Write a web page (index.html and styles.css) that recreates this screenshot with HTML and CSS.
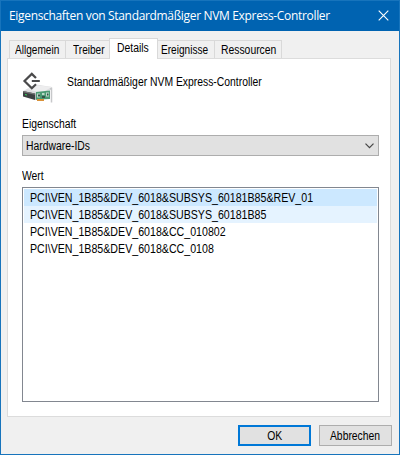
FILE: index.html
```html
<!DOCTYPE html>
<html lang="de">
<head>
<meta charset="utf-8">
<title>Eigenschaften</title>
<link rel="stylesheet" href="styles.css">
</head>
<body>
<main class="window">
  <header class="titlebar">
    <h1 class="title">Eigenschaften von Standardmäßiger NVM Express-Controller</h1>
    <svg class="close" width="11" height="11" viewBox="0 0 11 11"><path d="M.7.7l9.6 9.6M10.3.7L.7 10.3" stroke="#fff" stroke-width="1.1"/></svg>
  </header>
  <nav class="tabs">
    <div class="tab allgemein"><span class="text tight">Allgemein</span></div>
    <div class="tab treiber"><span class="text tight">Treiber</span></div>
    <div class="tab details"><span class="text">Details</span></div>
    <div class="tab ereignisse"><span class="text tight">Ereignisse</span></div>
    <div class="tab ressourcen"><span class="text">Ressourcen</span></div>
  </nav>
  <section class="panel">
    <div class="device">
      <svg class="device-icon" width="32" height="32" viewBox="0 0 32 32">
        <path d="M1 19L14 12.500 30 15v2L15 24z" fill="#dedee0"/>
        <path d="M12 13l18 2-11 6-14-4z" fill="#ededee"/>
        <path d="M1 19l12 2.500V28L1 24.500z" fill="#3d4042"/>
        <path d="M1 19l12 2.500v1.300L1 20.300z" fill="#777"/>
        <path d="M13 21.500l3-1V27l-3 1z" fill="#b5b5b7"/>
        <path d="M3 22.500l2 .5" stroke="#35d35e"/>
        <path d="M14 20l14-1.500V27l-14 .8z" fill="#4a9a73"/>
        <path d="M15 21.500h3v4h-3zM20 21h2.500v2H20zM24 20.500h3v4h-3z" fill="#b9d8c7"/>
        <path d="M16 22.500h2v2h-2zM20 24h3v2h-3zM25 21.500h1.500v2H25z" fill="#35534a"/>
        <path d="M15 27h7v2h-7z" fill="#d99139"/>
        <path d="M28 17l1.500-.5V30.500" fill="none" stroke="#c7c8ca" stroke-width="1.500"/>
        <path d="M14 6L9.800 1.900 2.500 9l7.300 7.200L14 12.300M9.800 9h8" fill="none" stroke="#4a4a4b" stroke-width="2.200"/>
      </svg>
      <span class="text device-name">Standardmäßiger NVM Express-Controller</span>
    </div>
    <div class="label property"><span class="text">Eigenschaft</span></div>
    <div class="select">
      <span class="text">Hardware-IDs</span>
      <svg width="9" height="6" viewBox="0 0 9 6"><path d="M.5.7l4 4 4-4" fill="none" stroke="#454545" stroke-width="1.200"/></svg>
    </div>
    <div class="label value"><span class="text">Wert</span></div>
    <div class="list">
      <div class="row selected-row"><span class="text wide">PCI\VEN_1B85&amp;DEV_6018&amp;SUBSYS_60181B85&amp;REV_01</span></div>
      <div class="row hover-row"><span class="text wide">PCI\VEN_1B85&amp;DEV_6018&amp;SUBSYS_60181B85</span></div>
      <div class="row"><span class="text wide">PCI\VEN_1B85&amp;DEV_6018&amp;CC_010802</span></div>
      <div class="row"><span class="text wide">PCI\VEN_1B85&amp;DEV_6018&amp;CC_0108</span></div>
    </div>
  </section>
  <footer class="actions">
    <button class="button primary"><span class="text centered">OK</span></button>
    <button class="button cancel"><span class="text centered">Abbrechen</span></button>
  </footer>
</main>
</body>
</html>
```
FILE: styles.css
```css
* { box-sizing: border-box; }
body { margin: 0; }
.window {
  width: 400px;
  height: 455px;
  border: 1px solid #1774bc;
  background: #f0f0f0;
  color: #000;
  font: 12px/16px "Liberation Sans", sans-serif;
  white-space: nowrap;
  overflow: hidden;
}
.text {
  display: inline-block;
  transform: scaleX(.864);
  transform-origin: left center;
}
.tight { transform: scaleX(.84); }
.wide { transform: scaleX(.886); }
.centered { transform-origin: center; }
.titlebar {
  display: flex;
  align-items: center;
  justify-content: space-between;
  height: 30px;
  padding: 0 10px 0 8px;
  background: #0063b1;
}
.title {
  margin: 0;
  color: #fff;
  font: 400 12px/28px "Open Sans", sans-serif;
  letter-spacing: -.33px;
}
.close { margin-top: -2px; }
.tabs {
  display: flex;
  align-items: flex-end;
  height: 27px;
  padding-left: 8px;
}
.tab {
  height: 18px;
  border: 1px solid #d9d9d9;
  border-width: 1px 1px 0 0;
  padding-left: 7px;
  line-height: 19px;
}
.allgemein { width: 57px; border-left-width: 1px; padding-left: 5px; }
.treiber { width: 43px; border-right: 0; }
.details {
  position: relative;
  width: 49px;
  height: 21px;
  margin-bottom: -1px;
  border-left-width: 1px;
  background: #fff;
}
.ereignisse { width: 57px; padding-left: 3px; }
.ressourcen { width: 67px; padding-left: 6px; }
.panel {
  display: flex;
  flex-direction: column;
  width: 384px;
  height: 359px;
  margin-left: 6px;
  padding: 12px 11px 13px 14px;
  border: 1px solid #dcdcdc;
  background: #fff;
}
.device { display: flex; flex: none; height: 45px; }
.device-icon { flex: none; margin-top: 1px; }
.device-name { margin: 3px 0 0 13px; }
.label { flex: none; }
.property { height: 19px; }
.select {
  display: flex;
  align-items: center;
  justify-content: space-between;
  flex: none;
  height: 21px;
  padding: 1px 4px 0 3px;
  border: 1px solid #adadad;
  background: #e1e1e1;
}
.value { height: 31px; padding-top: 12px; }
.list {
  flex: none;
  height: 215px;
  padding: 1px;
  border: 1px solid #828790;
}
.row { height: 17px; padding-left: 6px; line-height: 18px; }
.selected-row { background: #cce8ff; }
.hover-row { background: #e5f3ff; }
.actions {
  display: flex;
  justify-content: flex-end;
  gap: 8px;
  padding: 8px 7px 0 0;
}
.button {
  width: 73px;
  height: 21px;
  padding: 0;
  border: 1px solid #adadad;
  background: #e1e1e1;
  color: #000;
  font: inherit;
}
.primary { border: 2px solid #0078d7; }
```
